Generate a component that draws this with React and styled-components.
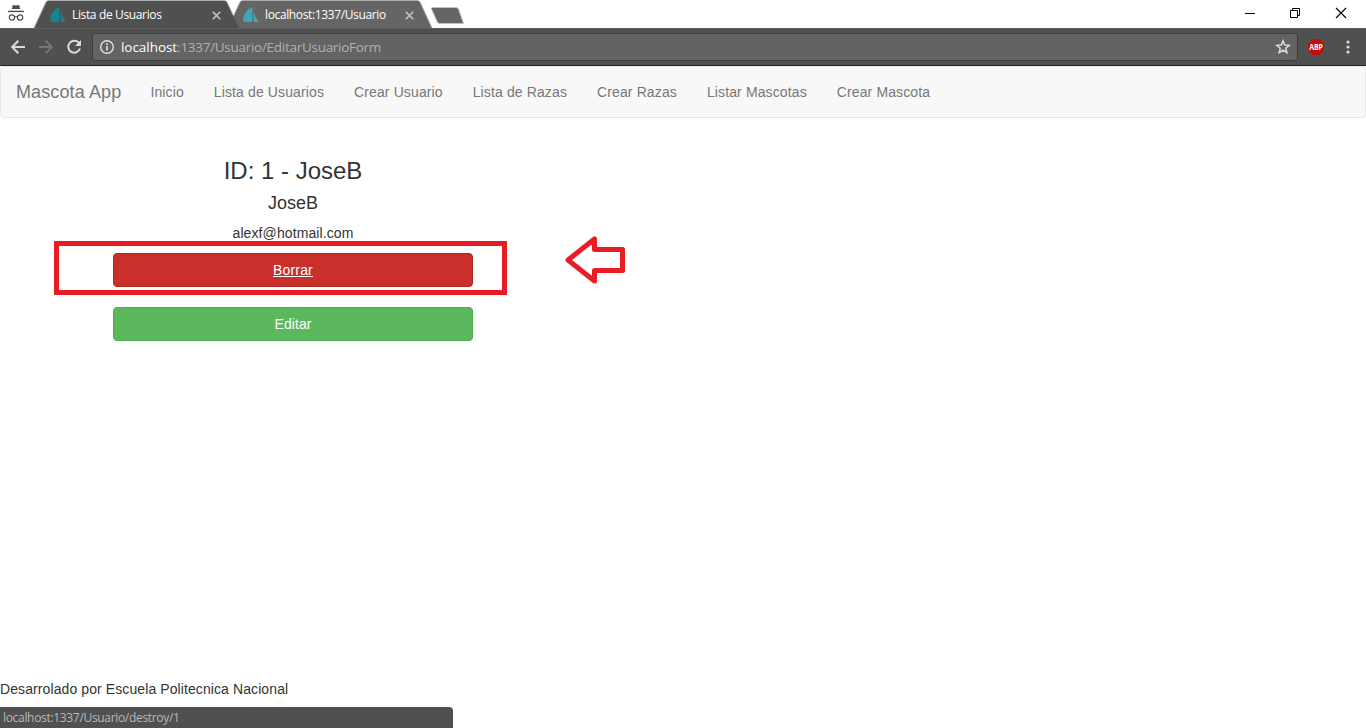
import React from "react";
import styled, { createGlobalStyle } from "styled-components";

const GlobalStyle = createGlobalStyle`
  * { box-sizing: border-box; }
  body { margin: 0; background: #fff; overflow: hidden; }
`;

const ui = `"Open Sans", "Noto Sans", sans-serif`;

const Window = styled.div`
  position: relative;
  display: flex;
  flex-direction: column;
  width: 1366px;
  height: 728px;
  overflow: hidden;
  background: #fff;
  color: #333;
  font: 14px/20px "Liberation Sans", Arial, sans-serif;
`;

const TabStrip = styled.div`
  display: flex;
  flex: none;
  height: 28px;
  padding-left: 7px;
  background: #fff;
`;

const Incognito = styled.svg`
  flex: none;
  width: 18px;
  height: 18px;
  margin: 4px 9px 0 0;
`;

const TabBox = styled.div`
  position: relative;
  z-index: ${(p) => (p.$active ? 2 : 1)};
  display: flex;
  align-items: center;
  flex: none;
  width: ${(p) => p.$width}px;
  height: 28px;
  margin-right: ${(p) => (p.$active ? -11 : -4)}px;
  padding: 2px 18px 0 ${(p) => (p.$active ? 16 : 15)}px;
`;

const TabShape = styled.svg`
  position: absolute;
  z-index: -1;
  left: 0;
  top: 0;
`;

const Sail = styled.svg`
  flex: none;
  width: 16px;
  height: 16px;
  margin-right: 6px;
`;

const TabTitle = styled.span`
  flex: 1;
  white-space: nowrap;
  font: 12px/16px ${ui};
  letter-spacing: ${(p) => p.$spacing}px;
  color: #fff;
`;

const TabClose = styled.svg`
  flex: none;
  width: 9px;
  height: 9px;
`;

const NewTab = styled.svg`
  flex: none;
  width: 38px;
  height: 22px;
  margin: 5px 0 0 1px;
`;

const WindowControls = styled.div`
  display: flex;
  margin: 7px 19px 0 auto;
  gap: 34px;
`;

const Control = styled.svg`
  width: 12px;
  height: 12px;
  fill: none;
  stroke: #000;
`;

const Toolbar = styled.div`
  display: flex;
  align-items: center;
  flex: none;
  height: 38px;
  padding: 0 10px;
  background: #505050;
  border-top: 1px solid #5f5f5f;
  border-bottom: 1px solid #252525;
`;

const ToolIcon = styled.svg`
  flex: none;
  width: 16px;
  height: 16px;
  margin-right: 12px;
  fill: none;
  stroke: ${(p) => (p.$dim ? "#757575" : "#dcdcdc")};
  stroke-width: 2;
`;

const AddressBar = styled.div`
  display: flex;
  align-items: center;
  width: 1206px;
  height: 28px;
  margin-left: -2px;
  padding: 0 6px 0 6px;
  background: #636363;
  border: 1px solid #3d3d3d;
  border-radius: 3px;
`;

const InfoIcon = styled.svg`
  width: 16px;
  height: 16px;
  margin-right: 6px;
`;

const Url = styled.span`
  flex: 1;
  font: 13.5px/20px ${ui};
  letter-spacing: -0.28px;
  color: #b1b1b1;
`;

const Host = styled.span`
  color: #fff;
  letter-spacing: -0.05px;
`;

const Star = styled.svg`
  width: 16px;
  height: 16px;
`;

const AdBlock = styled.svg`
  flex: none;
  width: 16px;
  height: 16px;
  margin: 0 22px 0 10px;
  overflow: visible;
`;

const MenuDots = styled.svg`
  width: 4px;
  height: 14px;
  fill: #dcdcdc;
`;

const Navbar = styled.nav`
  display: flex;
  align-items: center;
  flex: none;
  height: 52px;
  background: #f8f8f8;
  border: 1px solid #e7e7e7;
  border-radius: 4px;
  letter-spacing: 0.12px;
`;

const Brand = styled.a`
  padding: 0 14px 0 15px;
  font-size: 18px;
  color: #777;
`;

const NavLink = styled.a`
  padding: 0 15px;
  color: #777;
`;

const Card = styled.main`
  display: flex;
  flex-direction: column;
  flex: 1;
  width: 360px;
  margin: 40px 0 0 113px;
  text-align: center;
`;

const UserId = styled.h3`
  margin: 0 0 9px;
  font-size: 24px;
  font-weight: 400;
  line-height: 26px;
`;

const UserName = styled.h4`
  margin: 0 0 10px;
  font-size: 18px;
  font-weight: 400;
  line-height: 20px;
`;

const Email = styled.p`
  margin: 0 0 10px;
  letter-spacing: 0.1px;
`;

const Action = styled.a`
  height: 34px;
  margin-bottom: 20px;
  padding: 6px 12px;
  color: #fff;
  letter-spacing: ${(p) => (p.$danger ? 0.15 : 0.05)}px;
  background: ${(p) => (p.$danger ? "#c9302c" : "#5cb85c")};
  border: 1px solid ${(p) => (p.$danger ? "#ac2925" : "#4cae4c")};
  border-radius: 4px;
  text-decoration: ${(p) => (p.$danger ? "underline" : "none")};
`;

const Footer = styled.footer`
  flex: none;
  height: 49px;
  letter-spacing: 0.095px;
`;

const Highlight = styled.div`
  position: absolute;
  left: 54px;
  top: 241px;
  width: 453px;
  height: 54px;
  border: 5px solid #e81c24;
`;

const Arrow = styled.svg`
  position: absolute;
  left: 562px;
  top: 234px;
`;

const StatusBubble = styled.div`
  position: absolute;
  left: 0;
  bottom: 0;
  width: 453px;
  height: 21px;
  padding-left: 3px;
  background: #505050;
  border-top-right-radius: 4px;
  font: 12px/22px ${ui};
  letter-spacing: -0.32px;
  color: #b8b8b8;
`;

const links = [
  "Inicio",
  "Lista de Usuarios",
  "Crear Usuario",
  "Lista de Razas",
  "Crear Razas",
  "Listar Mascotas",
  "Crear Mascota",
];

function Tab({ title, width, active, spacing }) {
  const w = width;
  const top = `M0 28L12 2Q13 .5 15 .5H${w - 15}Q${w - 13} .5 ${w - 12} 2`;
  return (
    <TabBox $width={w} $active={active}>
      <TabShape width={w} height="28">
        <path d={`${top}L${w} 28Z`} fill={active ? "#505050" : "#656565"} />
        <path d={active ? `${top}L${w - 6} 15` : `${top}L${w} 28`} fill="none" stroke="#a9adab" />
      </TabShape>
      <Sail viewBox="0 0 16 16" fill={active ? "#148494" : "#42a5b5"}>
        <path d="M9.3 .3V15H1Q-.3 13 .7 9.4Q2.5 2.5 9.3 .3Z" />
        <path d="M10.4 4.5Q12.5 11 15.8 15H11Q10 10 10.4 4.5Z" />
      </Sail>
      <TabTitle $spacing={spacing}>{title}</TabTitle>
      <TabClose viewBox="0 0 9 9">
        <path d="M.8 .8L8.2 8.2M8.2 .8L.8 8.2" stroke="#c6c6c6" strokeWidth="1.6" />
      </TabClose>
    </TabBox>
  );
}

export default function App() {
  return (
    <Window>
      <GlobalStyle />
      <TabStrip>
        <Incognito viewBox="0 0 18 18">
          <path d="M4.8 5L5.8 1.2Q6 .8 6.6 1L9 1.5L11.4 1Q12 .8 12.2 1.2L13.2 5Z" fill="#505050" />
          <path d="M1 7.4H17" stroke="#505050" strokeWidth="1.4" />
          <g fill="none" stroke="#505050" strokeWidth="1.2">
            <circle cx="4.9" cy="13.5" r="2.6" />
            <circle cx="13.1" cy="13.5" r="2.6" />
            <path d="M7.5 13Q9 12 10.5 13" />
          </g>
        </Incognito>
        <Tab title="Lista de Usuarios" width={205} active spacing={-0.36} />
        <Tab title="localhost:1337/Usuario" width={204} spacing={-0.37} />
        <NewTab viewBox="0 0 38 22">
          <path d="M3.5 2.5H27Q28.5 2.5 29.5 4L34.5 18.5H11Q9 18.5 8.3 17L2.5 4Q2 2.5 3.5 2.5Z" fill="#656565" stroke="#bfc1c0" />
        </NewTab>
        <WindowControls>
          <Control viewBox="0 0 12 12"><path d="M2 6.5H12" /></Control>
          <Control viewBox="0 0 12 12"><path d="M1.5 3.5H8.5V10.5H1.5ZM3.5 3.5V1.5H10.5V8.5H8.5" /></Control>
          <Control viewBox="0 0 12 12"><path d="M1 1L11 11M11 1L1 11" strokeWidth="1.1" /></Control>
        </WindowControls>
      </TabStrip>
      <Toolbar>
        <ToolIcon viewBox="0 0 16 16"><path d="M15 8H2.5M8.3 1.8L2.2 8L8.3 14.2" /></ToolIcon>
        <ToolIcon viewBox="0 0 16 16" $dim><path d="M1 8H13.5M7.7 1.8L13.8 8L7.7 14.2" /></ToolIcon>
        <ToolIcon viewBox="0 0 16 16">
          <path d="M13.2 4.2A6 6 0 1 0 14 9.5" />
          <path d="M15 1V7H9Z" fill="#dcdcdc" stroke="none" />
        </ToolIcon>
        <AddressBar>
          <InfoIcon viewBox="0 0 16 16">
            <circle cx="8" cy="8" r="6.3" fill="none" stroke="#e2e2e2" strokeWidth="1.4" />
            <path d="M8 7V11.6M8 4.3V5.9" stroke="#e2e2e2" strokeWidth="1.6" />
          </InfoIcon>
          <Url><Host>localhost</Host>:1337/Usuario/EditarUsuarioForm</Url>
          <Star viewBox="0 0 16 16">
            <path d="M8 1.8L9.7 6L14.2 6.3L10.8 9.2L11.9 13.7L8 11.2L4.1 13.7L5.2 9.2L1.8 6.3L6.3 6Z" fill="none" stroke="#dcdcdc" strokeWidth="1.5" />
          </Star>
        </AddressBar>
        <AdBlock viewBox="0 0 16 16">
          <path d="M4.8 0H11.2L16 4.8V11.2L11.2 16H4.8L0 11.2V4.8Z" fill="#c60d0d" />
          <text x="8" y="10.8" textAnchor="middle" textLength="13.6" lengthAdjust="spacingAndGlyphs" fontFamily="Open Sans, sans-serif" fontSize="8" fontWeight="700" fill="#fff">ABP</text>
        </AdBlock>
        <MenuDots viewBox="0 0 4 14">
          <circle cx="2" cy="2" r="1.6" />
          <circle cx="2" cy="7" r="1.6" />
          <circle cx="2" cy="12" r="1.6" />
        </MenuDots>
      </Toolbar>
      <Navbar>
        <Brand>Mascota App</Brand>
        {links.map((l) => <NavLink key={l}>{l}</NavLink>)}
      </Navbar>
      <Card>
        <UserId>ID: 1 - JoseB</UserId>
        <UserName>JoseB</UserName>
        <Email>alexf@hotmail.com</Email>
        <Action $danger>Borrar</Action>
        <Action>Editar</Action>
      </Card>
      <Footer>Desarrolado por Escuela Politecnica Nacional</Footer>
      <Highlight />
      <Arrow width="66" height="52">
        <path d="M6 26L32.5 5V15.5H60.5V36.5H32.5V47Z" fill="none" stroke="#e81c24" strokeWidth="5" strokeLinejoin="round" />
      </Arrow>
      <StatusBubble>localhost:1337/Usuario/destroy/1</StatusBubble>
    </Window>
  );
}
